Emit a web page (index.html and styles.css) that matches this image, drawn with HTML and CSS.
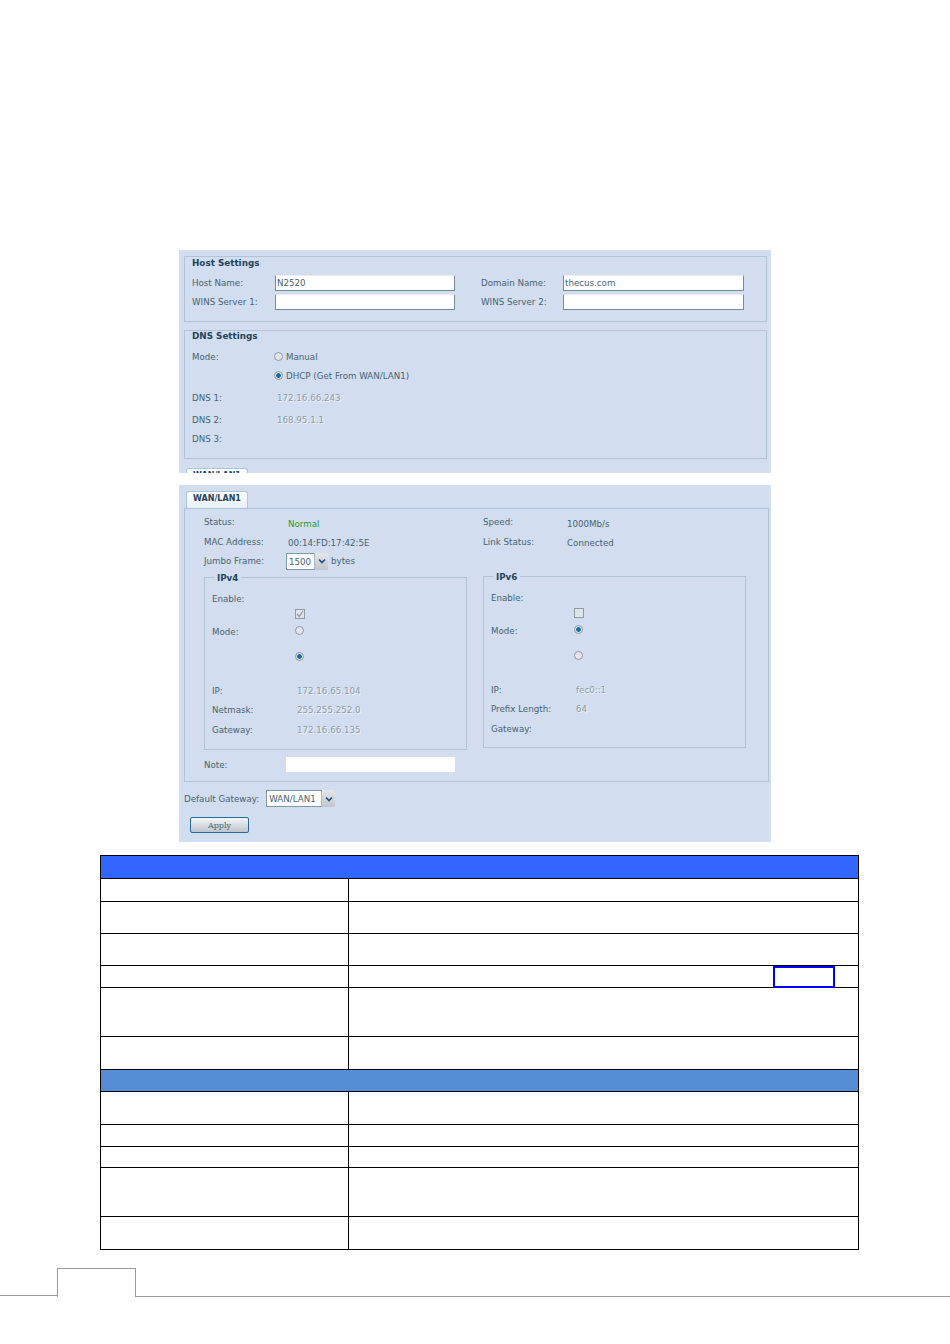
FILE: index.html
```html
<!DOCTYPE html>
<html lang="en">
<head>
    <meta charset="UTF-8">
    <meta name="viewport" content="width=device-width, initial-scale=1.0">
    <title>Network Settings</title>
    <link rel="stylesheet" href="styles.css">
</head>
<body>
    <!-- First screenshot: host and DNS -->
    <div class="panel panel-dns">
        <section class="box box-host">
            <h2>Host Settings</h2>
            <div class="host-grid">
                <label>Host Name:</label>
                <input class="text-input" type="text" value="N2520">
                <label>Domain Name:</label>
                <input class="text-input" type="text" value="thecus.com">
                <label>WINS Server 1:</label>
                <input class="text-input" type="text">
                <label>WINS Server 2:</label>
                <input class="text-input" type="text">
            </div>
        </section>
        <section class="box box-dns">
            <h2>DNS Settings</h2>
            <div class="dns-grid">
                <span>Mode:</span>
                <span class="choice"><input type="radio" name="dns"> Manual</span>
                <span></span>
                <span class="choice"><input type="radio" name="dns" checked> DHCP (Get From WAN/LAN1)</span>
                <span>DNS 1:</span><span class="muted">172.16.66.243</span>
                <span>DNS 2:</span><span class="muted">168.95.1.1</span>
                <span>DNS 3:</span><span></span>
            </div>
        </section>
        <div class="tab tab-cut">WAN/LAN1</div>
    </div>

    <!-- Second screenshot: WAN/LAN1 tab -->
    <div class="panel panel-wan">
        <div class="tab">WAN/LAN1</div>
        <section class="box box-wan">
            <div class="info-grid">
                <span>Status:</span><span class="value ok">Normal</span>
                <span>Speed:</span><span class="value">1000Mb/s</span>
                <span>MAC Address:</span><span class="value">00:14:FD:17:42:5E</span>
                <span>Link Status:</span><span class="value">Connected</span>
                <span>Jumbo Frame:</span>
                <span class="jumbo">
                    <span class="select select-jumbo">
                        <span class="select-text">1500</span>
                        <span class="select-btn"><svg width="8" height="6" viewBox="0 0 8 6"><path d="M1 1.500 4 4.500 7 1.500" fill="none" stroke="#1d4f86" stroke-width="1.600"/></svg></span>
                    </span>
                    bytes
                </span>
            </div>
            <div class="ip-row">
                <fieldset class="ip-set ipv4">
                    <legend>IPv4</legend>
                    <div class="ip-grid">
                        <span>Enable:</span><span></span>
                        <span></span>
                        <span class="check is-on"><svg width="8" height="8" viewBox="0 0 8 8"><path d="M1 4 3.200 6.500 7 1" fill="none" stroke="#8f9aa3" stroke-width="1.300"/></svg></span>
                        <span class="mode-label">Mode:</span><span class="radio-cell"><input type="radio" name="ip4"></span>
                        <span></span><span class="radio-cell"><input type="radio" name="ip4" checked></span>
                        <span class="ip-gap"></span>
                        <span>IP:</span><span class="muted">172.16.65.104</span>
                        <span>Netmask:</span><span class="muted">255.255.252.0</span>
                        <span>Gateway:</span><span class="muted">172.16.66.135</span>
                    </div>
                </fieldset>
                <fieldset class="ip-set ipv6">
                    <legend>IPv6</legend>
                    <div class="ip-grid">
                        <span>Enable:</span><span></span>
                        <span></span><span class="check"></span>
                        <span class="mode-label">Mode:</span><span class="radio-cell"><input type="radio" name="ip6" checked></span>
                        <span></span><span class="radio-cell"><input type="radio" name="ip6"></span>
                        <span class="ip-gap"></span>
                        <span>IP:</span><span class="muted">fec0::1</span>
                        <span>Prefix Length:</span><span class="muted">64</span>
                        <span>Gateway:</span><span></span>
                    </div>
                </fieldset>
            </div>
            <div class="note-row">
                <span class="note-label">Note:</span>
                <input class="note-input" type="text">
            </div>
        </section>
        <div class="gateway-row">
            <span>Default Gateway:</span>
            <span class="select select-gateway">
                <span class="select-text">WAN/LAN1</span>
                <span class="select-btn"><svg width="8" height="6" viewBox="0 0 8 6"><path d="M1 1.500 4 4.500 7 1.500" fill="none" stroke="#1d4f86" stroke-width="1.600"/></svg></span>
            </span>
        </div>
        <button class="apply" type="button">Apply</button>
    </div>

    <!-- Table from the manual page, cells are empty in the picture -->
    <table class="manual-table">
        <colgroup>
            <col class="col-left">
            <col>
        </colgroup>
        <tr class="h22 head-main"><td colspan="2"></td></tr>
        <tr class="h22"><td></td><td></td></tr>
        <tr class="h31"><td></td><td></td></tr>
        <tr class="h31"><td></td><td></td></tr>
        <tr class="h21"><td></td><td class="marked"><span class="mark"></span></td></tr>
        <tr class="h48"><td></td><td></td></tr>
        <tr class="h32"><td></td><td></td></tr>
        <tr class="h21 head-sub"><td colspan="2"></td></tr>
        <tr class="h32"><td></td><td></td></tr>
        <tr class="h21"><td></td><td></td></tr>
        <tr class="h20"><td></td><td></td></tr>
        <tr class="h48"><td></td><td></td></tr>
        <tr class="h32"><td></td><td></td></tr>
    </table>

    <!-- Page number tab -->
    <div class="page-foot">
        <div class="foot-left"></div>
        <div class="foot-tab"></div>
        <div class="foot-right"></div>
    </div>
</body>
</html>
```

FILE: styles.css
```css
body {
    margin: 0;
    height: 1344px;
    overflow: hidden;
    background: #fff;
    font-family: "DejaVu Sans", sans-serif;
    font-size: 8.700px;
    color: #46626f;
}

/* Screenshots */
.panel {
    position: relative;
    box-sizing: border-box;
    width: 592px;
    margin-left: 179px;
    background: #d2deef;
    overflow: hidden;
}

.panel-dns {
    height: 223px;
    margin-top: 250px;
    padding: 6px 4px 0 5px;
}

.panel-wan {
    height: 357px;
    margin-top: 12px;
    padding: 6px 2px 0 5px;
}

.box {
    box-sizing: border-box;
    border: 1px solid #b3c3d6;
}

h2 {
    margin: 0;
    font-size: 8.800px;
    font-weight: bold;
    color: #24435a;
}

.box-host {
    height: 66px;
    padding: 1px 0 0 7px;
}

.box-dns {
    height: 129px;
    margin-top: 8px;
    padding: 0 0 0 7px;
}

.host-grid {
    display: grid;
    grid-template-columns: 83px 206px 82px 181px;
    row-gap: 3px;
    grid-auto-rows: 16px;
    align-items: center;
    margin-top: 7px;
}

.text-input {
    box-sizing: border-box;
    width: 180px;
    height: 16px;
    margin: 0;
    padding: 0 1px;
    border: 1px solid #6f8f98;
    border-top-color: #e9eef3;
    border-radius: 0;
    background: #fff;
    font: inherit;
    color: #46626f;
}

.host-grid .text-input:nth-of-type(even) {
    width: 181px;
}

.dns-grid {
    display: grid;
    grid-template-columns: 82px 1fr;
    grid-template-rows: 19px 19px 26px 18px 19px;
    align-items: center;
    margin-top: 6px;
}

.choice {
    display: flex;
    align-items: center;
    gap: 3px;
}

.muted {
    color: #8e9baa;
    text-shadow: 1px 1px 0 #eef3fa;
}

.dns-grid .muted {
    padding-left: 3px;
}

/* Radios and checkboxes */
input[type="radio"] {
    appearance: none;
    box-sizing: border-box;
    width: 9px;
    height: 9px;
    margin: 0;
    border: 1px solid #8f9aa3;
    border-radius: 50%;
    background: #e2e6ea;
}

input[type="radio"]:checked {
    background: radial-gradient(circle, #0f6ea8 0 2px, #e2e6ea 2.600px);
}

.check {
    box-sizing: border-box;
    display: flex;
    align-items: center;
    justify-content: center;
    width: 10px;
    height: 10px;
    margin-left: -2px;
    border: 1px solid #8f9aa3;
    background: #dfe4e9;
}

/* Tabs */
.tab {
    box-sizing: border-box;
    width: 62px;
    height: 17px;
    margin-left: 2px;
    padding-top: 2px;
    border: 1px solid #a9c6e0;
    border-bottom: none;
    border-radius: 3px 3px 0 0;
    background: linear-gradient(#ffffff, #e9eff7);
    text-align: center;
    font-weight: bold;
    font-size: 8px;
    color: #24435a;
}

.tab-cut {
    margin-top: 9px;
}

.box-wan {
    height: 274px;
    padding: 3.500px 0 0 19px;
    border-top-color: #a9c6e0;
}

.info-grid {
    display: grid;
    grid-template-columns: 84px 195px 84px 1fr;
    grid-auto-rows: 19.500px;
    align-items: center;
}

.value {
    padding-top: 3px;
}

.ok {
    color: #1f9a2a;
}

.jumbo {
    display: flex;
    align-items: center;
    gap: 3px;
    margin-left: -2px;
    grid-column: span 3;
}

.select {
    display: flex;
    height: 17px;
}

.select-text {
    box-sizing: border-box;
    flex: 1;
    padding: 3px 0 0 2px;
    border: 1px solid #7d99a5;
    border-right-color: #a9b6bd;
    background: #fff;
}

.select-btn {
    display: flex;
    align-items: center;
    justify-content: center;
    width: 13px;
    background: linear-gradient(#e4e7ea, #bfc6cb);
}

.select-jumbo {
    width: 42px;
}

.select-gateway {
    width: 69px;
}

/* IPv4 / IPv6 */
.ip-row {
    display: flex;
    align-items: flex-start;
    gap: 16px;
    margin-top: 1.500px;
}

.ip-set {
    box-sizing: border-box;
    width: 263px;
    margin: 0;
    padding: 7px 0 0 7px;
    border: 1px solid #b3c3d6;
    min-inline-size: 0;
}

.ipv4 {
    height: 177px;
}

.ipv6 {
    height: 176px;
    margin-top: -1px;
}

legend {
    margin-left: 2px;
    padding: 0 3px;
    font-weight: bold;
    color: #24435a;
}

.ip-grid {
    display: grid;
    grid-template-columns: 85px 1fr;
    grid-template-rows: 18px 12px 22px 30px 10px 18px 21px 19px;
    align-items: center;
}

.ip-gap {
    grid-column: span 2;
}

.mode-label {
    padding-top: 3px;
}

.radio-cell {
    margin-left: -2px;
    display: flex;
    align-items: center;
}

.note-row {
    display: grid;
    grid-template-columns: 82px 169px;
    align-items: center;
    margin-top: 7px;
}

.note-label {
    padding-top: 2px;
}

.note-input {
    height: 15px;
    width: 169px;
    box-sizing: border-box;
    margin: 0;
    border: none;
    background: #fff;
}

.gateway-row {
    display: flex;
    align-items: center;
    gap: 7px;
    margin-top: 8px;
}

.apply {
    display: block;
    box-sizing: border-box;
    width: 59px;
    height: 16px;
    margin: 10px 0 0 6px;
    padding: 0;
    border: 1px solid #2b6a94;
    border-radius: 2px;
    background: linear-gradient(#f4f6f8, #bcc4cc);
    font-family: "DejaVu Serif", serif;
    font-size: 8px;
    color: #46626f;
}

/* Table */
.manual-table {
    box-sizing: border-box;
    width: 759px;
    height: 395px;
    margin: 13px 0 0 100px;
    border-collapse: collapse;
    table-layout: fixed;
}

.manual-table td {
    padding: 0;
    border: 1px solid #000;
}

.col-left { width: 248px; }

.h20 { height: 21px; }
.h21 { height: 22px; }
.h22 { height: 23px; }
.h31 { height: 32px; }
.h32 { height: 33px; }
.h48 { height: 49px; }

.head-main td { background: #3366ff; }
.head-sub td { background: #558ed5; }

.marked {
    position: relative;
}

/* Blue marker drawn over the cell */
.mark {
    position: absolute;
    top: 0;
    right: 23px;
    box-sizing: border-box;
    width: 62px;
    height: 22px;
    border: 2px solid #0000ff;
}

/* Footer */
.page-foot {
    display: flex;
    align-items: flex-end;
    margin-top: 18px;
    height: 29px;
}

.foot-left {
    width: 57px;
    margin-bottom: 1px;
    border-bottom: 1px solid #999;
}

.foot-tab {
    box-sizing: border-box;
    width: 79px;
    height: 29px;
    border: 1px solid #999;
    border-bottom: none;
}

.foot-right {
    flex: 1;
    border-bottom: 1px solid #999;
}
```
